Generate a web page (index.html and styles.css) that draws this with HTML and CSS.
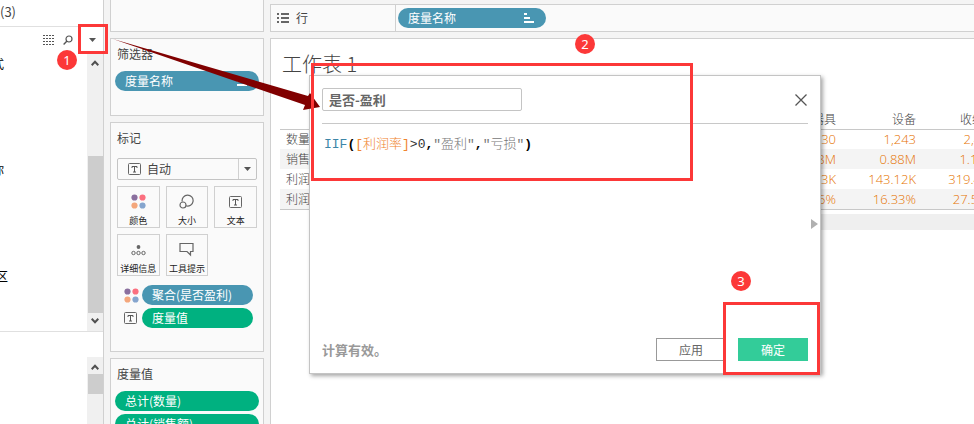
FILE: index.html
```
<!DOCTYPE html>
<html lang="zh-CN">
<head>
    <meta charset="UTF-8">
    <meta name="viewport" content="width=device-width, initial-scale=1.0">
    <title>工作表 1</title>
    <link rel="stylesheet" href="styles.css">
</head>
<body>

    <!-- shared icons -->
    <svg class="icon-defs" aria-hidden="true">
        <symbol id="icon-text" viewBox="0 0 14 12">
            <rect x="0.5" y="0.5" width="12" height="11" rx="1" fill="none" stroke="#666"/>
            <path d="M4 5V3.5h5V5M6.500 3.500v5.500M5 9h3" fill="none" stroke="#555"/>
        </symbol>
        <symbol id="icon-color" viewBox="0 0 15 15">
            <circle cx="3.500" cy="3.500" r="3.100" fill="#8a6f9e"/>
            <circle cx="11.500" cy="3.500" r="3.100" fill="#fb6f7f"/>
            <circle cx="3.500" cy="11.500" r="3.100" fill="#f4a77c"/>
            <circle cx="11.500" cy="11.500" r="3.100" fill="#85a5ce"/>
        </symbol>
        <symbol id="icon-sort" viewBox="0 0 10 10">
            <path d="M0 1h3M0 5h6M0 9h10" stroke="#fff" stroke-width="2"/>
        </symbol>
        <symbol id="icon-caret" viewBox="0 0 7 4">
            <path d="M0 0h7L3.500 4z" fill="#555"/>
        </symbol>
        <symbol id="icon-up" viewBox="0 0 8 6">
            <path d="M0.700 5.200L4 1.800l3.300 3.400" fill="none" stroke="#505050" stroke-width="2"/>
        </symbol>
        <symbol id="icon-down" viewBox="0 0 8 6">
            <path d="M0.700 0.800L4 4.200l3.300-3.400" fill="none" stroke="#505050" stroke-width="2"/>
        </symbol>
    </svg>

    <div class="workbook">
        <aside class="data-pane">
            <div class="source">(3)</div>
            <div class="toolbar">
                <button class="tool" aria-label="查看数据">
                    <svg width="12" height="10"><path d="M0 0.500h12M0 3.500h12M0 6.500h12M0 9.500h12" stroke="#555" stroke-dasharray="2 1"/></svg>
                </button>
                <button class="tool" aria-label="搜索">
                    <svg width="10" height="10"><circle cx="6" cy="4" r="3" fill="none" stroke="#555" stroke-width="1.200"/><path d="M4 6L0.600 9.400" stroke="#555" stroke-width="1.400"/></svg>
                </button>
                <button class="tool" aria-label="菜单">
                    <svg width="7" height="4"><use href="#icon-caret"/></svg>
                </button>
            </div>
            <div class="fields">
                <ul class="field-list">
                    <li>式</li>
                    <li>你</li>
                    <li class="wide">区</li>
                </ul>
                <div class="scrollbar">
                    <svg width="8" height="6"><use href="#icon-up"/></svg>
                    <div class="thumb"></div>
                    <svg width="8" height="6"><use href="#icon-down"/></svg>
                </div>
            </div>
            <div class="params">
                <div class="scrollbar">
                    <svg width="8" height="6"><use href="#icon-up"/></svg>
                    <div class="thumb"></div>
                </div>
            </div>
        </aside>

        <section class="cards">
            <div class="card card-pages"></div>
            <div class="card card-filters">
                <h2>筛选器</h2>
                <div class="pill blue">度量名称<svg width="10" height="10"><use href="#icon-sort"/></svg></div>
            </div>
            <div class="card card-marks">
                <h2>标记</h2>
                <div class="marks">
                    <label class="mark-type">
                        <svg width="14" height="12"><use href="#icon-text"/></svg>
                        <select aria-label="标记类型">
                            <option>自动</option>
                        </select>
                        <span class="caret"><svg width="7" height="4"><use href="#icon-caret"/></svg></span>
                    </label>
                    <div class="mark-buttons">
                        <button><svg width="15" height="15"><use href="#icon-color"/></svg>颜色</button>
                        <button><svg width="15" height="15" fill="none" stroke="#666" stroke-width="1.200"><path d="M3.200 7.500A5.500 5.500 0 1 1 7 11.800"/><circle cx="4" cy="11" r="3"/></svg>大小</button>
                        <button><svg width="14" height="15" viewBox="0 -2 14 15"><use href="#icon-text" width="14" height="12"/></svg>文本</button>
                        <button><svg width="15" height="15" viewBox="0 -2 15 15" fill="none" stroke="#666"><circle cx="7.500" cy="3" r="1.900" fill="#666" stroke="none"/><circle cx="2.500" cy="9" r="1.700"/><circle cx="7.500" cy="9" r="1.700"/><circle cx="12.500" cy="9" r="1.700"/></svg>详细信息</button>
                        <button><svg width="15" height="15" fill="none" stroke="#666" stroke-width="1.200"><path d="M1 1.500h13v8h-2.500v3.500L8 9.500H1z"/></svg>工具提示</button>
                    </div>
                    <div class="encoding">
                        <svg width="15" height="15"><use href="#icon-color"/></svg>
                        <div class="pill blue">聚合(是否盈利)</div>
                    </div>
                    <div class="encoding">
                        <svg width="14" height="12"><use href="#icon-text"/></svg>
                        <div class="pill green">度量值</div>
                    </div>
                </div>
            </div>
            <div class="card card-values">
                <h2>度量值</h2>
                <div class="pill green">总计(数量)</div>
                <div class="pill green">总计(销售额)</div>
            </div>
        </section>

        <main class="sheet-area">
            <div class="shelf">
                <div class="shelf-label">
                    <svg width="12" height="10"><path d="M0 1h2M0 5h2M0 9h2M4 1h8M4 5h8M4 9h8" stroke="#666" stroke-width="2"/></svg>
                    行
                </div>
                <div class="pill blue">度量名称<svg width="10" height="10"><use href="#icon-sort"/></svg></div>
            </div>
            <div class="worksheet">
                <h1>工作表 1</h1>
                <table>
                    <thead>
                        <tr><th class="measure"></th><th>器具</th><th>设备</th><th>收纳具</th></tr>
                    </thead>
                    <tbody>
                        <tr><th class="measure">数量</th><td>30</td><td>1,243</td><td>2,437</td></tr>
                        <tr><th class="measure">销售额</th><td>8M</td><td>0.88M</td><td>1.15M</td></tr>
                        <tr><th class="measure">利润</th><td>3K</td><td>143.12K</td><td>319.45K</td></tr>
                        <tr><th class="measure">利润率</th><td>6%</td><td>16.33%</td><td>27.56%</td></tr>
                    </tbody>
                </table>
                <div class="h-scroll"></div>
            </div>
        </main>
    </div>

    <form class="dialog" role="dialog" aria-label="计算字段">
        <div class="dialog-head">
            <input type="text" value="是否-盈利" aria-label="名称">
            <button type="button" class="close" aria-label="关闭">
                <svg width="12" height="12"><path d="M0.500 0.500l11 11M11.500 0.500l-11 11" stroke="#555" stroke-width="1.300"/></svg>
            </button>
        </div>
        <div class="formula"><span class="fn">IIF</span><b>(</b><span class="field">[利润率]</span>&gt;0<b>,</b><span class="str">"盈利"</span><b>,</b><span class="str">"亏损"</span><b>)</b></div>
        <button type="button" class="expand" aria-label="展开">
            <svg width="7" height="10"><path d="M0 0l7 5-7 5z" fill="#b0b0b0"/></svg>
        </button>
        <div class="dialog-foot">
            <span class="status">计算有效。</span>
            <button type="button" class="btn">应用</button>
            <button type="button" class="btn primary">确定</button>
        </div>
    </form>

    <!-- step marks over the window -->
    <svg class="arrow" width="210" height="74"><path d="M1 1L196 58l2-3 10 14-17 3 2-5z" fill="#800000"/></svg>
    <div class="frame frame-menu"></div>
    <div class="frame frame-formula"></div>
    <div class="frame frame-ok"></div>
    <span class="step step-1">1</span>
    <span class="step step-2">2</span>
    <span class="step step-3">3</span>

</body>
</html>
```
FILE: styles.css
```
* {
    box-sizing: border-box;
    padding: 0;
    margin: 0;
}
:root {
    --line: #d0d0d0;
    --blue: #4996b2;
    --green: #00b180;
    --red: #fc3838;
    --text: #444;
}
body {
    font-family: "Noto Sans CJK SC", sans-serif;
    font-size: 12px;
    line-height: 16px;
    color: var(--text);
    overflow: hidden;
    position: relative;
}
button, input, select {
    font: inherit;
    color: inherit;
    background: none;
    border: none;
    border-radius: 0;
}
svg {
    display: block;
    flex: none;
}
.icon-defs {
    position: absolute;
    width: 0;
    height: 0;
}
.workbook {
    display: grid;
    grid-template-columns: 104px 166px minmax(0, 1fr);
    height: 100vh;
    background-color: #f4f4f4;
}

/* data pane */
.data-pane {
    display: flex;
    flex-direction: column;
    background-color: white;
    border-right: 1px solid var(--line);
    min-height: 0;
    overflow: hidden;
}
.source {
    height: 27px;
    padding-top: 4px;
    border-bottom: 1px solid #e0e0e0;
    font-size: 13px;
}
.toolbar {
    display: flex;
    align-items: center;
    justify-content: flex-end;
    gap: 8px;
    height: 26px;
    padding-right: 7px;
}
.tool:last-child {
    padding-left: 8px;
}
.fields {
    display: flex;
    justify-content: space-between;
    height: 279px;
    border-bottom: 1px solid #e0e0e0;
    overflow: hidden;
}
.field-list {
    list-style-type: none;
    display: grid;
    align-content: start;
    gap: 84px;
    color: black;
    line-height: 22px;
}
.field-list li {
    text-indent: -8px;
}
.field-list .wide {
    text-indent: -4px;
}
.scrollbar {
    display: flex;
    flex-direction: column;
    justify-content: space-between;
    align-items: center;
    width: 16px;
    padding: 7px 0;
    background-color: #f0f0f0;
}
.thumb {
    width: 15px;
    background-color: #cdcdcd;
}
.fields .thumb {
    height: 157px;
    margin: auto 0 5px;
}
.params {
    display: flex;
    justify-content: flex-end;
    flex: 1;
    padding-top: 25px;
}
.params .scrollbar {
    justify-content: flex-start;
    gap: 4px;
}
.params .thumb {
    height: 20px;
}

/* cards column */
.cards {
    display: flex;
    flex-direction: column;
    gap: 6px;
    padding: 0 6px;
    min-height: 0;
    overflow: hidden;
}
.card {
    flex: none;
    padding: 7px 4px;
    background-color: #fafafa;
    border: 1px solid var(--line);
}
.card h2 {
    font-size: 12px;
    font-weight: normal;
    padding-left: 2px;
    margin-bottom: 9px;
}
.card-pages {
    height: 32px;
    border-top: none;
}
.card-filters {
    height: 78px;
}
.card-marks {
    height: 230px;
}
.pill {
    display: flex;
    align-items: center;
    justify-content: space-between;
    height: 20px;
    padding: 0 12px 0 10px;
    border-radius: 10px;
    color: white;
}
.pill.blue {
    background-color: var(--blue);
}
.pill.green {
    background-color: var(--green);
}
.card-values .pill {
    margin-bottom: 3px;
}
.marks {
    padding: 3px 2px 0;
}
.mark-type {
    display: flex;
    align-items: center;
    height: 22px;
    padding-left: 10px;
    border: 1px solid #c4c4c4;
    border-radius: 2px;
}
.mark-type select {
    appearance: none;
    flex: 1;
    min-width: 0;
    height: 20px;
    padding-left: 5px;
}
.caret {
    display: grid;
    place-items: center;
    width: 18px;
    height: 20px;
    border-left: 1px solid var(--line);
}
.mark-buttons {
    display: grid;
    grid-template-columns: repeat(3, 1fr);
    gap: 6px;
    margin: 6px 0 9px;
}
.mark-buttons button {
    display: flex;
    flex-direction: column;
    align-items: center;
    justify-content: space-between;
    height: 42px;
    padding-top: 7px;
    border: 1px solid var(--line);
    font-size: 9px;
    line-height: 13px;
    white-space: nowrap;
    color: #222;
}
.encoding {
    display: grid;
    grid-template-columns: 15px 111px;
    align-items: center;
    gap: 3px;
    padding-left: 7px;
    margin-bottom: 3px;
}

/* worksheet */
.sheet-area {
    display: flex;
    flex-direction: column;
    gap: 6px;
    padding-top: 4px;
    min-height: 0;
}
.shelf {
    display: flex;
    align-items: center;
    height: 28px;
    background-color: #fafafa;
    border: 1px solid var(--line);
    border-right: none;
}
.shelf-label {
    display: flex;
    align-items: center;
    gap: 7px;
    width: 125px;
    height: 26px;
    padding-left: 6px;
    border-right: 1px solid var(--line);
}
.shelf .pill {
    width: 148px;
    margin-left: 2px;
}
.worksheet {
    flex: 1;
    padding: 11px 0 0 9px;
    background-color: white;
    border: 1px solid var(--line);
    border-width: 1px 0 0 1px;
    overflow: hidden;
}
.worksheet h1 {
    font-size: 20px;
    font-weight: 300;
    line-height: 28px;
    padding-left: 2px;
    margin-bottom: 31px;
}
.worksheet table {
    table-layout: fixed;
    width: 720px;
    border-collapse: collapse;
}
.worksheet th, .worksheet td {
    width: 80px;
    height: 20px;
    padding-right: 4px;
    text-align: right;
    font-weight: 300;
    line-height: 18px;
}
.worksheet td {
    font-family: "Open Sans", sans-serif;
    font-size: 13px;
    color: #e67300;
}
.worksheet .measure {
    width: 480px;
    padding-left: 6px;
    text-align: left;
}
.worksheet tbody {
    border: 1px solid #c8c8c8;
    border-width: 1px 0;
}
.worksheet tbody tr:nth-child(even) {
    background-color: #f4f4f4;
}
.h-scroll {
    height: 16px;
    margin: 4px 0 0 80px;
    background-color: #efefef;
}

/* calculation editor */
.dialog {
    display: flex;
    flex-direction: column;
    position: absolute;
    left: 309px;
    top: 75px;
    width: 512px;
    height: 299px;
    padding: 12px;
    background-color: white;
    border: 1px solid #c4c4c4;
    box-shadow: 2px 2px 4px rgba(0, 0, 0, 0.35);
}
.dialog-head {
    display: flex;
    align-items: center;
    justify-content: space-between;
    height: 36px;
    padding-bottom: 12px;
    border-bottom: 1px solid #c8c8c8;
}
.dialog-head input {
    width: 200px;
    height: 23px;
    padding-left: 6px;
    border: 1px solid #c4c4c4;
    border-radius: 2px;
    font-size: 13px;
    font-weight: bold;
    color: #666;
}
.close {
    padding-right: 1px;
}
.formula {
    flex: 1;
    padding: 13px 2px;
    font-family: "Liberation Mono", "Noto Sans CJK SC", monospace;
    font-size: 13px;
    color: #333;
}
.formula b {
    color: black;
}
.fn {
    color: #3d86a8;
}
.field {
    color: #f0842f;
}
.field, .str {
    font-weight: 300;
}
.str {
    color: #777;
}
.expand {
    position: absolute;
    right: 2px;
    top: 143px;
}
.dialog-foot {
    display: flex;
    align-items: center;
    gap: 12px;
}
.status {
    margin-right: auto;
    font-size: 13px;
    font-weight: bold;
    color: #999;
}
.btn {
    width: 70px;
    height: 23px;
    border: 1px solid #999;
    color: #666;
}
.btn.primary {
    background-color: #33cc99;
    border-color: #33cc99;
    color: white;
}

/* step marks */
.arrow {
    position: absolute;
    left: 112px;
    top: 38px;
}
.frame {
    position: absolute;
    border: 3px solid var(--red);
    pointer-events: none;
}
.frame-menu {
    left: 78px;
    top: 24px;
    width: 30px;
    height: 30px;
}
.frame-formula {
    left: 311px;
    top: 63px;
    width: 382px;
    height: 118px;
}
.frame-ok {
    left: 723px;
    top: 302px;
    width: 97px;
    height: 73px;
}
.step {
    position: absolute;
    width: 20px;
    height: 20px;
    border-radius: 50%;
    background-color: var(--red);
    color: white;
    font-family: "Noto Sans", sans-serif;
    font-size: 13px;
    line-height: 20px;
    text-align: center;
}
.step-1 {
    left: 57px;
    top: 50px;
}
.step-2 {
    left: 575px;
    top: 34px;
}
.step-3 {
    left: 731px;
    top: 271px;
}
```
